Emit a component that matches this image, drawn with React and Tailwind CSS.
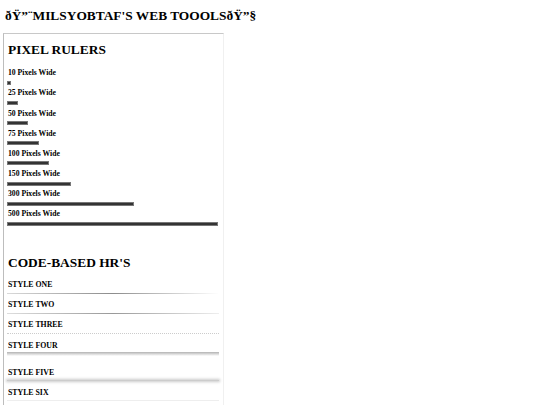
import React from 'react';

const rulers = [
    { label: '10 Pixels Wide', width: 4 },
    { label: '25 Pixels Wide', width: 11 },
    { label: '50 Pixels Wide', width: 21 },
    { label: '75 Pixels Wide', width: 32 },
    { label: '100 Pixels Wide', width: 42 },
    { label: '150 Pixels Wide', width: 64 },
    { label: '300 Pixels Wide', width: 127 },
    { label: '500 Pixels Wide', width: 211 },
];

const serif = { fontFamily: '"Liberation Serif", "Times New Roman", serif' };

const App = () => {
    return (
    <div className="bg-white min-h-[405px] pl-[3px] text-black" style={serif}>
        <h1 className="pt-[8.4px] pl-[2px] text-[13.4px] leading-[16px] font-bold whitespace-nowrap">
            ðŸ”¨MILSYOBTAF'S WEB TOOOLSðŸ”§
        </h1>

        <div className="mt-[8.6px] w-[221px] border-t border-l border-t-[#c8c8c8] border-l-[#bdbdbd] border-r border-r-[#f0f0f0] pl-[4px] pt-[8.4px] pb-[10px]">
            <h2 className="text-[13.4px] leading-[16px] font-bold">PIXEL RULERS</h2>

            <div className="mt-[9.8px]">
                {rulers.map((r, i) => (
                <div key={i} className="h-[20.2px]">
                    <div className="text-[7.7px] leading-[10px] font-bold whitespace-nowrap">{r.label}</div>
                    <div
                        className="-ml-[1px] mt-[2.5px] h-[4px] bg-[#333] border border-[#777]"
                        style={{ width: r.width }}
                    />
                </div>
                ))}
            </div>

            <h2 className="mt-[25px] text-[13.4px] leading-[16px] font-bold">CODE-BASED HR'S</h2>

            <div className="mt-[9.1px] -ml-[1px] w-[212px]">
                <div className="pl-[1px] text-[7.8px] leading-[10px] font-bold">STYLE ONE</div>
                <div className="mt-[3px] h-[1px] bg-[linear-gradient(to_right,rgba(0,0,0,0.15),rgba(0,0,0,0.45),rgba(0,0,0,0))]" />

                <div className="mt-[6.3px] pl-[1px] text-[7.8px] leading-[10px] font-bold">STYLE TWO</div>
                <div className="mt-[2.9px] h-[1px] bg-[linear-gradient(to_right,#ddd,#999,#eee)]" />

                <div className="mt-[6.1px] pl-[1px] text-[7.8px] leading-[10px] font-bold">STYLE THREE</div>
                <div className="mt-[2.9px] h-0 border-t border-dotted border-[#ccc]" />

                <div className="mt-[7.1px] pl-[1px] text-[7.8px] leading-[10px] font-bold">STYLE FOUR</div>
                <div className="mt-[1.2px] h-[4px] bg-[linear-gradient(to_bottom,rgba(0,0,0,0.3),rgba(0,0,0,0))]" />

                <div className="mt-[11.5px] pl-[1px] text-[7.8px] leading-[10px] font-bold">STYLE FIVE</div>
                <div className="mt-[2px] h-[1px] bg-[#ccc] shadow-[0_0_3px_1px_rgba(0,0,0,0.22)]" />

                <div className="mt-[7px] pl-[1px] text-[7.8px] leading-[10px] font-bold">STYLE SIX</div>
                <div className="mt-[2.5px] h-0 border-t border-[#eee]" />
            </div>
        </div>
    </div>
    );
}

export default App;
